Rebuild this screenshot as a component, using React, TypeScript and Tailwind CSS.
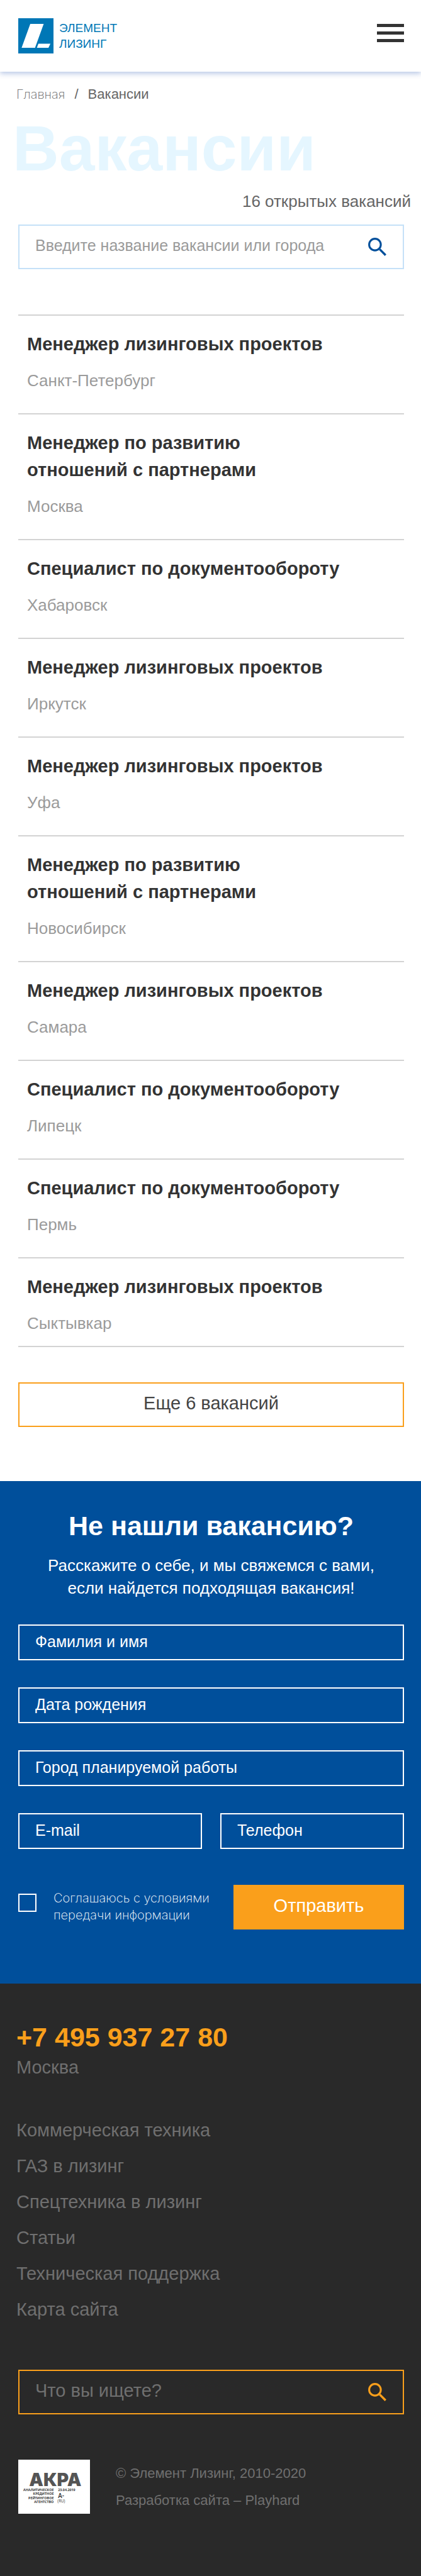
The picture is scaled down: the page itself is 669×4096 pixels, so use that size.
import React from "react";

type Vacancy = { title: string[]; city: string };

const LEASING = ["Менеджер лизинговых проектов"];
const PARTNERS = ["Менеджер по развитию", "отношений с партнерами"];
const DOCS = ["Специалист по документообороту"];

const vacancies: Vacancy[] = [
  { title: LEASING, city: "Санкт-Петербург" },
  { title: PARTNERS, city: "Москва" },
  { title: DOCS, city: "Хабаровск" },
  { title: LEASING, city: "Иркутск" },
  { title: LEASING, city: "Уфа" },
  { title: PARTNERS, city: "Новосибирск" },
  { title: LEASING, city: "Самара" },
  { title: DOCS, city: "Липецк" },
  { title: DOCS, city: "Пермь" },
  { title: LEASING, city: "Сыктывкар" },
];

const footerLinks = [
  "Коммерческая техника",
  "ГАЗ в лизинг",
  "Спецтехника в лизинг",
  "Статьи",
  "Техническая поддержка",
  "Карта сайта",
];

function SearchIcon() {
  return (
    <svg viewBox="0 0 32 32" className="size-[29px]" fill="none" stroke="currentColor" aria-hidden="true">
      <circle cx="12" cy="12" r="10.2" strokeWidth="3.4" />
      <path d="M20.3 20.3 L30.6 30.6" strokeWidth="3.8" />
    </svg>
  );
}

function Logo() {
  return (
    <a href="#" className="flex gap-[9px]">
      <svg viewBox="0 0 63 63" className="size-14" aria-hidden="true">
        <rect width="63" height="63" fill="#0077b6" />
        <path d="M21.5 10 H45.5 L30 53 H6 Z M36 45.5 H57.5 L54 53 H33.3 Z" fill="#fff" />
      </svg>
      <span className="pt-[3px] text-[19px] leading-[25px] text-[#0077b6]">
        ЭЛЕМЕНТ
        <br />
        ЛИЗИНГ
      </span>
    </a>
  );
}

function RatingBadge() {
  return (
    <svg viewBox="0 0 128 96" className="h-[86px] w-[114px] bg-white" fill="#333">
      <text x="66" y="46.7" textAnchor="middle" fill="#555" className="font-['Inter'] text-[32px] font-black">
        АКРА
      </text>
      <g textAnchor="end" className="font-['Open_Sans'] text-[6px] font-bold">
        <text x="63.3" y="55.3">АНАЛИТИЧЕСКОЕ</text>
        <text x="63.3" y="62.7">КРЕДИТНОЕ</text>
        <text x="63.3" y="70">РЕЙТИНГОВОЕ</text>
        <text x="63.3" y="77.3">АГЕНТСТВО</text>
      </g>
      <text x="71" y="55.3" className="font-['Open_Sans'] text-[6px] font-bold">
        23.04.2019
      </text>
      <text x="71" y="68.3" className="font-['Open_Sans'] text-[11px] font-semibold">
        A-
      </text>
      <text x="70" y="76.5" className="font-['Open_Sans'] text-[7px]">
        (RU)
      </text>
    </svg>
  );
}

function SearchBox({ label, tone }: { label: string; tone: "light" | "dark" }) {
  const light = tone === "light";
  return (
    <form
      role="search"
      className={
        light
          ? "flex h-[71px] items-center border-2 border-[#c5e1f8] pr-[26px] pl-[25px] text-[#004f9b]"
          : "flex h-[71px] items-center border-2 border-[#fa9f1b] pr-[26px] pl-[25px] text-[#fa9f1b]"
      }
    >
      <input
        type="text"
        aria-label={label}
        placeholder={label}
        className={
          light
            ? "h-full min-w-0 flex-1 bg-transparent pb-1 text-[25px] text-[#333] outline-none placeholder:text-[#9b9b9b]"
            : "h-full min-w-0 flex-1 bg-transparent pb-1 text-[29px] text-white outline-none placeholder:text-[#6f6f6f]"
        }
      />
      <button type="button" aria-label="Найти">
        <SearchIcon />
      </button>
    </form>
  );
}

function Field({ label, type = "text" }: { label: string; type?: string }) {
  return (
    <input
      type={type}
      aria-label={label}
      placeholder={label}
      className="block h-[57px] w-full min-w-0 border-2 border-white bg-transparent px-[25px] pb-0.5 text-[25px] text-white outline-none placeholder:text-white"
    />
  );
}

export default function App() {
  return (
    <div className="min-h-screen bg-white font-['Liberation_Sans',Arial,sans-serif]">
      <header className="flex h-[114px] items-start justify-between pt-[29px] pr-[27px] pl-[29px] shadow-[0_3px_8px_rgba(20,70,170,0.3)]">
        <Logo />
        <button type="button" aria-label="Меню" className="flex w-[43px] flex-col gap-[7px] py-[9px]">
          <span className="h-[5px] w-full bg-[#333]" />
          <span className="h-[5px] w-full bg-[#333]" />
          <span className="h-[5px] w-full bg-[#333]" />
        </button>
      </header>

      <main>
        <nav aria-label="Навигация" className="mt-[22px] flex gap-[15px] pl-[26px] text-[22px] leading-7 text-[#666]">
          <a href="#" className="font-['Inter'] text-[20px] font-extralight">
            Главная
          </a>
          <span>/</span>
          <span>Вакансии</span>
        </nav>
        <h1 className="mt-[22px] pl-5 text-[102px] leading-[100px] font-bold text-[#e5f6ff]">Вакансии</h1>
        <p className="mt-[18px] pr-4 text-right text-[26px] leading-8 text-[#666]">16 открытых вакансий</p>

        <div className="mt-[21px] pr-[27px] pl-[29px]">
          <SearchBox label="Введите название вакансии или города" tone="light" />

          <ul className="mt-[72px] border-b-2 border-[#d3d3d3]">
            {vacancies.map((v, i) => (
              <li key={i} className="border-t-2 border-[#d3d3d3] pt-6 pb-9 pl-3.5 last:pb-5">
                <a href="#" className="block text-[29px] leading-[43px] font-bold text-[#333]">
                  {v.title.map((line) => (
                    <span key={line} className="block">
                      {line}
                    </span>
                  ))}
                </a>
                <p className="mt-5 text-[26px] leading-8 text-[#9b9b9b]">{v.city}</p>
              </li>
            ))}
          </ul>

          <button
            type="button"
            className="mt-14 mb-[86px] block h-[71px] w-full border-2 border-[#fa9f1b] pb-1 text-[29px] text-[#444]"
          >
            Еще 6 вакансий
          </button>
        </div>

        <section className="bg-[#004f9b] pt-[47px] pr-[27px] pb-[86px] pl-[29px] text-white">
          <h2 className="text-center text-[43px] leading-[48px] font-bold">Не нашли вакансию?</h2>
          <p className="mt-[21px] text-center text-[26px] leading-9">
            Расскажите о себе, и мы свяжемся с вами,
            <br />
            если найдется подходящая вакансия!
          </p>
          <form className="mt-10">
            <div className="flex flex-col gap-[43px]">
              <Field label="Фамилия и имя" />
              <Field label="Дата рождения" />
              <Field label="Город планируемой работы" />
              <div className="flex gap-[29px]">
                <Field label="E-mail" type="email" />
                <Field label="Телефон" type="tel" />
              </div>
            </div>
            <div className="mt-[57px] flex items-start justify-between">
              <div className="flex items-start gap-[27px] pt-2">
                <input
                  id="agree"
                  type="checkbox"
                  className="mt-1.5 size-[29px] appearance-none border-2 border-white checked:bg-white"
                />
                <label htmlFor="agree" className="font-['Inter'] text-[20px] leading-[27px] font-extralight">
                  Соглашаюсь с условиями
                  <br />
                  передачи информации
                </label>
              </div>
              <button type="submit" className="h-[71px] w-[271px] bg-[#fa9f1b] pb-1 text-[29px]">
                Отправить
              </button>
            </div>
          </form>
        </section>
      </main>

      <footer className="bg-[#292929] pt-[61px] pr-[27px] pb-[99px] pl-[29px] text-[#6f6f6f]">
        <div className="-ml-[3px]">
          <a href="tel:+74959372780" className="block text-[43px] leading-[48px] font-bold text-[#fa9f1b]">
            +7 495 937 27 80
          </a>
          <p className="mt-1.5 text-[29px] leading-9">Москва</p>
          <ul className="mt-[54px] text-[29px] leading-[57px]">
            {footerLinks.map((l) => (
              <li key={l}>
                <a href="#">{l}</a>
              </li>
            ))}
          </ul>
        </div>
        <div className="mt-[67px]">
          <SearchBox label="Что вы ищете?" tone="dark" />
        </div>
        <div className="mt-[72px] flex gap-[41px]">
          <RatingBadge />
          <p className="text-[22px] leading-[43px]">
            © Элемент Лизинг, 2010-2020
            <br />
            Разработка сайта – Playhard
          </p>
        </div>
      </footer>
    </div>
  );
}
